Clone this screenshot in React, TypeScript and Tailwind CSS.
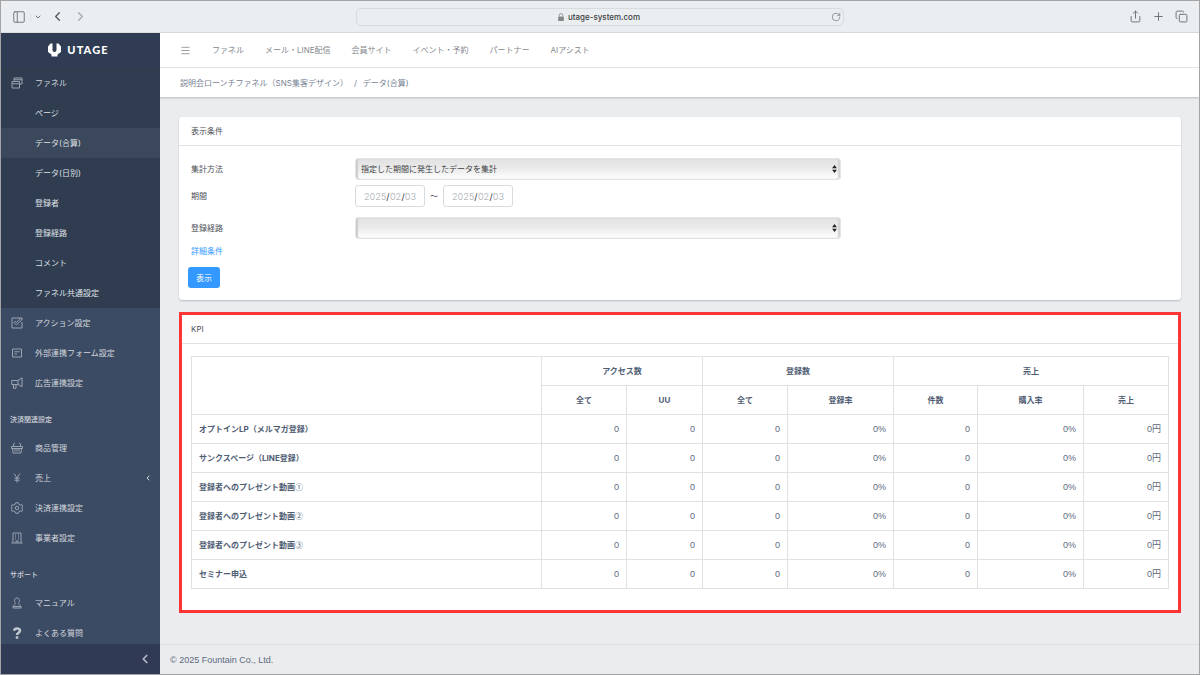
import { type ReactNode } from 'react';
import { ChevronDown, ChevronLeft, ChevronRight, Copy, Menu, PanelLeft, Plus, RotateCw, Share } from 'lucide-react';

function Icon({ children }: { children: ReactNode }) {
  return (
    <svg viewBox="0 0 24 24" fill="none" stroke="currentColor" strokeWidth="2" className="h-3 w-3 shrink-0 text-[#9aa3b1]" aria-hidden="true">
      {children}
    </svg>
  );
}

const icons = {
  funnel: (
    <Icon>
      <path d="M2 9h15v13H2zM2 13.500h15M6 9V6.500M6 6V2h16v12h-5M6 5.500h16" />
    </Icon>
  ),
  action: (
    <Icon>
      <path d="M22 10v12H2V2h20v3M6 11l5 5L22 5l-3-2.500-8 8.500-2.500-2.500z" />
    </Icon>
  ),
  form: (
    <Icon>
      <path d="M3 4h18v16H3zM7 9.500h10M7 14h5" />
    </Icon>
  ),
  ads: (
    <Icon>
      <path d="M22 1.500v18l-8-4.500H1.500V7H14zM14 7v8M5 15v7.500h5V15" />
    </Icon>
  ),
  basket: (
    <Icon>
      <path d="M1 9h22v4H1zM3 13l1 9h16l1-9M5 9V4l3-2M19 9V4l-3-2M8 13v6M12 13v6M16 13v6" />
    </Icon>
  ),
  yen: (
    <Icon>
      <path d="M6 3l6 9 6-9M12 12v9M7 12.500h10M7 16.500h10" />
    </Icon>
  ),
  settings: (
    <Icon>
      <path d="M9.500 1.500h5l1 3 3.500 1.700 3-.7 1.500 4-2 2.500 2 2.500-1.500 4-3-.7-3.500 1.700-1 3h-5l-1-3L5 17.800l-3 .7-1.500-4 2-2.500-2-2.500L2 5.500l3 .7 3.500-1.700z" />
      <circle cx="12" cy="12" r="3.500" />
    </Icon>
  ),
  building: (
    <Icon>
      <path d="M4 22V2h16v20M1 22h22M8 6h2M14 6h2M8 10h2M14 10h2M8 14h2M14 14h2M10 22v-4h4v4" />
    </Icon>
  ),
  manual: (
    <Icon>
      <path d="M12 2c-3.500 0-5 2.500-5 5.500S8.500 12 9 13c0 2.500-5 3-5 7v2h16v-2c0-4-5-4.500-5-7 .5-1 2-2.500 2-5.500S15.500 2 12 2zM4 19h16" />
    </Icon>
  ),
  question: (
    <svg viewBox="0 0 24 24" fill="none" stroke="currentColor" strokeWidth="5" className="h-3 w-3 shrink-0 text-[#c0c6cf]" aria-hidden="true">
      <path d="M6 7.500C7 4 9 3 12 3c3.500 0 6 1.500 6 4.500 0 4-6 4-6 8.500M12 18.500v5" />
    </svg>
  ),
};

const funnelItems = ['ページ', 'データ(合算)', 'データ(日別)', '登録者', '登録経路', 'コメント', 'ファネル共通設定'];

const navLinks = ['ファネル', 'メール・LINE配信', '会員サイト', 'イベント・予約', 'パートナー', 'AIアシスト'];

const kpiRows = [
  { name: 'オプトインLP（メルマガ登録）' },
  { name: 'サンクスページ（LINE登録）' },
  { name: '登録者へのプレゼント動画', mark: '①' },
  { name: '登録者へのプレゼント動画', mark: '②' },
  { name: '登録者へのプレゼント動画', mark: '③' },
  { name: 'セミナー申込' },
];

const kpiValues = ['0', '0', '0', '0%', '0', '0%', '0円'];

function SideLink({ icon, label, arrow }: { icon: ReactNode; label: string; arrow?: boolean }) {
  return (
    <a href="#" className="flex h-[30px] shrink-0 items-center gap-3 pr-2 pl-[10px] text-[#d3d7dd]">
      {icon}
      <span className="flex-1">{label}</span>
      {arrow && <ChevronLeft className="h-2 w-2" strokeWidth={3} />}
    </a>
  );
}

function SideTitle({ children }: { children: ReactNode }) {
  return <h2 className="h-[35px] shrink-0 px-[9px] pt-4 text-[7px] leading-3 font-medium text-[#ced2d8]">{children}</h2>;
}

function BrowserBar() {
  return (
    <div className="flex h-8 shrink-0 items-center border-b border-[#d9dcde] bg-[#eaeef0] px-[11px] text-[#6f7375]">
      <div className="flex flex-1 items-center">
        <button aria-label="サイドバー" className="mr-1">
          <PanelLeft className="h-[14px] w-[14px]" strokeWidth={1.6} />
        </button>
        <button aria-label="タブグループ" className="mr-2 border-l border-[#e0e3e5] pl-[3px]">
          <ChevronDown className="h-2 w-2" strokeWidth={3} />
        </button>
        <button aria-label="戻る" className="mr-2">
          <ChevronLeft className="h-[15px] w-[15px] text-[#515557]" />
        </button>
        <button aria-label="進む">
          <ChevronRight className="h-[15px] w-[15px] text-[#a5a9ab]" />
        </button>
      </div>
      <div className="flex h-[18px] w-[488px] items-center rounded-[5px] border border-[#d8dcde] px-[2px] text-[8px] font-medium text-[#3d4042]">
        <div className="flex flex-1 items-center justify-center gap-1 pl-2">
          <svg viewBox="0 0 10 14" className="h-2 w-[6px] text-[#85898b]" aria-hidden="true">
            <rect y="6" width="10" height="8" rx="1.500" fill="currentColor" />
            <path d="M2 6V4a3 3 0 0 1 6 0v2" fill="none" stroke="currentColor" strokeWidth="1.500" />
          </svg>
          utage-system.com
        </div>
        <button aria-label="再読み込み">
          <RotateCw className="h-[10px] w-[10px] text-[#85898b]" />
        </button>
      </div>
      <div className="flex flex-1 items-center justify-end gap-[10px]">
        <button aria-label="共有">
          <Share className="h-[13px] w-[13px]" strokeWidth={1.8} />
        </button>
        <button aria-label="新規タブ">
          <Plus className="h-[13px] w-[13px]" strokeWidth={1.8} />
        </button>
        <button aria-label="タブ一覧">
          <Copy className="h-[13px] w-[13px]" strokeWidth={1.8} />
        </button>
      </div>
    </div>
  );
}

function Sidebar() {
  return (
    <aside className="relative z-10 flex w-[159px] shrink-0 flex-col bg-[#3c4b64]">
      <div className="flex h-[35px] shrink-0 items-center justify-center gap-[6px] bg-[#303c54] pr-1 pb-[2px] text-white">
        <svg viewBox="0 0 26 28" className="h-[14px] w-[13px]" aria-hidden="true">
          <path fill="currentColor" d="M0 7l5-6h4v13a4 4 0 0 0 8 0V1h4l5 6v11l-7 5v4H7v-4l-7-5z" />
        </svg>
        <span className="font-[Lato,sans-serif] text-[11px] leading-4 font-black tracking-widest">UTAGE</span>
      </div>
      <nav className="flex min-h-0 flex-1 flex-col overflow-hidden">
        <div className="shrink-0 bg-[#303c50]">
          <SideLink icon={icons.funnel} label="ファネル" />
          {funnelItems.map((item) => (
            <a
              key={item}
              href="#"
              className={`flex h-[30px] items-center pl-[34px] text-[#dfe2e6] ${item === 'データ(合算)' ? 'bg-[#3b475b]' : ''}`}
            >
              {item}
            </a>
          ))}
        </div>
        <SideLink icon={icons.action} label="アクション設定" />
        <SideLink icon={icons.form} label="外部連携フォーム設定" />
        <SideLink icon={icons.ads} label="広告連携設定" />
        <SideTitle>決済関連設定</SideTitle>
        <SideLink icon={icons.basket} label="商品管理" />
        <SideLink icon={icons.yen} label="売上" arrow />
        <SideLink icon={icons.settings} label="決済連携設定" />
        <SideLink icon={icons.building} label="事業者設定" />
        <SideTitle>サポート</SideTitle>
        <SideLink icon={icons.manual} label="マニュアル" />
        <SideLink icon={icons.question} label="よくある質問" />
      </nav>
      <button aria-label="メニューを閉じる" className="flex h-[30px] shrink-0 items-center justify-end bg-[#303a54] pr-2">
        <ChevronLeft className="h-[14px] w-[14px] text-[#b4bac5]" strokeWidth={3} />
      </button>
    </aside>
  );
}

function Select({ id, value }: { id: string; value: string }) {
  return (
    <div className="relative w-full max-w-[486px]">
      <select
        id={id}
        className="block h-[22px] w-full appearance-none rounded-[3px] border border-[#e3e4e6] bg-linear-to-b from-[#e2e2e2] via-[#ebebeb] to-white px-[5px] text-[#3c4045] shadow-[inset_2px_0_1px_#cecece,inset_-2px_0_1px_#d4d4d4]"
      >
        <option>{value}</option>
      </select>
      <svg viewBox="0 0 6 10" className="pointer-events-none absolute top-[7px] right-1 h-2 w-[5px]" aria-hidden="true">
        <path d="M3 0l3 4H0zM3 10L0 6h6z" fill="#222" />
      </svg>
    </div>
  );
}

function DateField({ label }: { label: string }) {
  return (
    <div
      role="group"
      aria-label={label}
      className="flex h-[22px] w-[70px] items-center justify-center rounded-[3px] border border-[#d8dbe0] pt-[2px] text-[9px] leading-3 text-[#333]"
    >
      <input aria-label={`${label} 年`} defaultValue="2025" className="w-[23px] text-right text-[#b9bcc0] outline-none" />/
      <input aria-label={`${label} 月`} defaultValue="02" className="w-3 text-center text-[#b9bcc0] outline-none" />/
      <input aria-label={`${label} 日`} defaultValue="03" className="w-3 text-[#b9bcc0] outline-none" />
    </div>
  );
}

function SearchCard() {
  return (
    <section className="rounded-[3px] bg-white text-[#4b4f56] shadow-[0_1px_2px_#b4bac5]">
      <h2 className="flex h-[29px] items-center border-b border-[#e1e3e7] px-3">表示条件</h2>
      <form className="px-3 pt-3 pb-3">
        <div className="flex items-center">
          <label htmlFor="method" className="w-[164px] shrink-0">集計方法</label>
          <Select id="method" value="指定した期間に発生したデータを集計" />
        </div>
        <div className="mt-[5px] flex items-center">
          <span className="w-[164px] shrink-0">期間</span>
          <DateField label="開始日" />
          <span className="w-[18px] text-center">～</span>
          <DateField label="終了日" />
        </div>
        <div className="mt-[10px] flex items-center">
          <label htmlFor="route" className="w-[164px] shrink-0">登録経路</label>
          <Select id="route" value="" />
        </div>
        <a href="#" className="mt-[6px] block w-fit text-[#3399ff]">詳細条件</a>
        <button type="button" className="mt-[10px] -ml-[3px] block h-[21px] w-8 rounded-[3px] bg-[#3399ff] text-white">
          表示
        </button>
      </form>
    </section>
  );
}

function KpiCard() {
  return (
    <section className="mt-3 border-[3px] border-[#fd3535] bg-white pb-[21px]">
      <h2 className="flex h-[29px] items-center border-b border-[#e1e3e7] px-[9px] text-[#4b4f56]">KPI</h2>
      <div className="px-[9px] pt-3">
        <table className="w-full table-fixed border-collapse text-[#4f5d73] [&_td]:border [&_td]:border-[#dfe1e5] [&_th]:border [&_th]:border-[#dfe1e5]">
          <colgroup>
            <col />
            <col className="w-[85px]" />
            <col className="w-[76px]" />
            <col className="w-[85px]" />
            <col className="w-[106px]" />
            <col className="w-[84px]" />
            <col className="w-[106px]" />
            <col className="w-[85px]" />
          </colgroup>
          <thead>
            <tr className="h-[29px]">
              <td rowSpan={2} />
              <th colSpan={2}>アクセス数</th>
              <th colSpan={2}>登録数</th>
              <th colSpan={3}>売上</th>
            </tr>
            <tr className="h-[29px]">
              <th>全て</th>
              <th>UU</th>
              <th>全て</th>
              <th>登録率</th>
              <th>件数</th>
              <th>購入率</th>
              <th>売上</th>
            </tr>
          </thead>
          <tbody>
            {kpiRows.map((row, index) => (
              <tr key={index} className="h-[29px]">
                <th scope="row" className="px-[7px] text-left">
                  {row.name}
                  {row.mark && <span className="font-['Noto_Sans_CJK_JP',sans-serif] font-normal">{row.mark}</span>}
                </th>
                {kpiValues.map((value, i) => (
                  <td
                    key={i}
                    className="px-[7px] text-right font-['Liberation_Sans','Noto_Sans_CJK_JP',sans-serif] text-[9px] text-[#5d6a7e]"
                  >
                    {value}
                  </td>
                ))}
              </tr>
            ))}
          </tbody>
        </table>
      </div>
    </section>
  );
}

export default function App() {
  return (
    <div className="flex h-screen flex-col overflow-hidden border border-[#a3a4a5] font-[Inter,'Noto_Sans_CJK_JP',sans-serif] text-[8px] leading-3">
      <BrowserBar />
      <div className="flex min-h-0 flex-1">
        <Sidebar />
        <div className="flex min-w-0 flex-1 flex-col bg-[#ebecee]">
          <header className="shrink-0 bg-white shadow-[0_1px_2px_#b4bac5]">
            <nav className="flex h-[35px] items-center gap-[21px] border-b border-[#e1e3e7] px-5 text-[#85888e]">
              <button aria-label="メニュー">
                <Menu className="h-[11px] w-[11px]" strokeWidth={1.8} />
              </button>
              {navLinks.map((link) => (
                <a key={link} href="#" className="whitespace-nowrap">{link}</a>
              ))}
            </nav>
            <div className="flex h-[29px] items-center gap-[6px] px-5 text-[#768192]">
              <a href="#">説明会ローンチファネル（SNS集客デザイン）</a>
              <span>/</span>
              <span>データ(合算)</span>
            </div>
          </header>
          <main className="min-h-0 flex-1 overflow-hidden pt-5 pr-[18px] pl-[19px]">
            <SearchCard />
            <KpiCard />
          </main>
          <footer className="flex h-[30px] shrink-0 items-center border-t border-[#dcdee2] px-[10px] font-['Liberation_Sans',sans-serif] text-[9px] text-[#5d6a7e]">
            © 2025 Fountain Co., Ltd.
          </footer>
        </div>
      </div>
    </div>
  );
}
